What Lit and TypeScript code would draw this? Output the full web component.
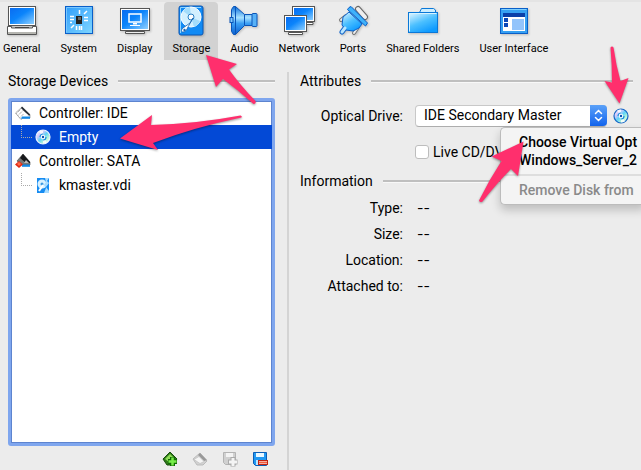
import { LitElement, html, svg, css } from "lit";
import { customElement, state } from "lit/decorators.js";
import { classMap } from "lit/directives/class-map.js";

const gradients = svg`
  <defs>
    <linearGradient id="screen" x1="0" y1="0" x2="1" y2="1">
      <stop offset="0" stop-color="#0a6cf0" /><stop offset=".45" stop-color="#0b84fb" /><stop offset="1" stop-color="#8fd0ff" />
    </linearGradient>
    <linearGradient id="sky" x1="0" y1="0" x2="1" y2="1">
      <stop offset="0" stop-color="#2f9dfb" /><stop offset="1" stop-color="#7fd6ff" />
    </linearGradient>
    <linearGradient id="folder" x1="0" y1="0" x2=".6" y2="1">
      <stop offset="0" stop-color="#e8f8ff" /><stop offset=".55" stop-color="#4cc0ff" /><stop offset="1" stop-color="#0f9bff" />
    </linearGradient>
    <linearGradient id="cone" x1="0" y1="0" x2="0" y2="1">
      <stop offset="0" stop-color="#0a6fdc" /><stop offset=".4" stop-color="#a9e2ff" /><stop offset=".6" stop-color="#3ba0f5" /><stop offset="1" stop-color="#0a5fd0" />
    </linearGradient>
    <linearGradient id="disc" x1="0" y1="0" x2="1" y2="1">
      <stop offset="0" stop-color="#ffffff" /><stop offset=".3" stop-color="#d5c9fb" /><stop offset=".5" stop-color="#5ed3f7" /><stop offset=".7" stop-color="#b6f5d8" /><stop offset="1" stop-color="#ffffff" />
    </linearGradient>
  </defs>`;

const big: Record<string, unknown> = {
  general: svg`
    <rect x="2.500" y="2.500" width="27" height="19" fill="#fff" stroke="#555" />
    <rect x="4" y="4" width="24" height="16" fill="url(#screen)" />
    <path d="M1.500 22.500h4v1.500h21v-1.500h4v8h-29z" fill="#fff" stroke="#555" />
    <path d="M2 28h28v2H2z" fill="#b5b5b0" /><path d="M9 23h14v1H9z" fill="#444" />`,
  system: svg`
    <rect x="2.500" y="2.500" width="27" height="27" fill="url(#sky)" stroke="#0a5fc8" />
    <path d="M3.500 28.500v-25h25" fill="none" stroke="#79c7ff" />
    <rect x="13" y="12" width="6" height="8" fill="#222" /><path d="M15 13h3v3h-3z" fill="#666" />
    <path d="M16.500 6v4M7 12.500h4M7 15.500h4M7 18.500h2M21 13.500h4M21 16.500h4M13.500 22v4M16.500 22v4M18.500 22v4M21 10l3-3M8 24l3-3" stroke="#fff" stroke-width="1.500" fill="none" />`,
  display: svg`
    <rect x="1.500" y="4.500" width="29" height="22" fill="#fff" stroke="#555" />
    <rect x="3" y="6" width="26" height="19" fill="url(#screen)" />
    <rect x="10" y="10" width="12" height="8" fill="none" stroke="#fff" stroke-width="1.500" />
    <path d="M14 19h4v1.500h-4zM11 21h10v1H11z" fill="#fff" />
    <path d="M6.500 27.500h19v2h-19z" fill="#eee" stroke="#555" />`,
  storage: svg`
    <rect x="4" y="2" width="24" height="29" rx="2" fill="#118af4" stroke="#0b57b5" />
    <path d="M5.500 29V3.500H26" fill="none" stroke="#8fd4ff" />
    <circle cx="16" cy="13" r="10" fill="#d2f0ff" stroke="#fff" />
    <path d="M16 13L8 7a10 10 0 0 1 7-4zM16 13l9 4a10 10 0 0 1-6 6z" fill="#a3dcfb" />
    <circle cx="16" cy="13" r="3" fill="#fff" stroke="#297fc5" />
    <path d="M18 14l-5 9c-1 3-3 5-5 5s-2-2 0-4l7-5z" fill="#fff" stroke="#1663af" stroke-width=".8" />
    <circle cx="9.500" cy="26" r="1.200" fill="#1663af" />`,
  audio: svg`
    <path d="M7.500 2.500h-2l-2 3v22l2 3h2l9-9h10v-11h-10z" fill="url(#cone)" stroke="#0a55b8" />
    <path d="M7.500 2.500v28M16.500 10.500v11" stroke="#0a55b8" fill="none" />
    <rect x="24" y="9.500" width="5" height="13" rx="1" fill="#57b1f7" stroke="#0a55b8" />
    <rect x="2" y="13.500" width="3" height="5" fill="#80caff" stroke="#0a55b8" />`,
  network: svg`
    <rect x="9.500" y="2.500" width="22" height="15" fill="#fff" stroke="#555" />
    <rect x="11" y="4" width="19" height="12" fill="url(#screen)" />
    <path d="M23 18.500h7v2h-7" fill="#fff" stroke="#555" />
    <rect x="1.500" y="11.500" width="22" height="16" fill="#fff" stroke="#555" />
    <rect x="3" y="13" width="19" height="13" fill="url(#screen)" />
    <path d="M5.500 28.500h14v2h-14z" fill="#fff" stroke="#555" />`,
  ports: svg`
    <path d="M21 5l7 8" stroke="#666" stroke-width="6" stroke-linecap="round" />
    <path d="M21 5l7 8" stroke="#eee" stroke-width="4" stroke-linecap="round" />
    <path d="M9 12l-5 4M21 23l-4 6" stroke="#777" stroke-width="4" stroke-linecap="round" />
    <path d="M9 12l-5 4M21 23l-4 6" stroke="#eee" stroke-width="2" stroke-linecap="round" />
    <path d="M8 24l-3 4" stroke="#0a5fc8" stroke-width="5" stroke-linecap="round" />
    <path d="M12 8L25 20l-3 4-6 3-7-1-4-5 1-8z" fill="url(#folder)" stroke="#0a5fc8" />
    <path d="M8 24l-3 4" stroke="#b8e5ff" stroke-width="3" stroke-linecap="round" />
    <path d="M12 3.500l2-1L30.500 19l-2 3L10.500 5.500z" fill="#3fb2fa" stroke="#0a5fc8" />`,
  folders: svg`
    <path d="M12.500 8.500l2-4h12l2 1.500v2.500z" fill="#cdeeff" stroke="#0a78d8" />
    <rect x="1.500" y="8.500" width="29" height="20" fill="url(#folder)" stroke="#0a78d8" />
    <path d="M2.500 27.500v-18h27" fill="none" stroke="#d8f3ff" />`,
  ui: svg`
    <rect x="2.500" y="4.500" width="27" height="25" fill="#36a0f2" stroke="#0a5fc8" />
    <path d="M3.500 5.500h25" stroke="#80d0ff" />
    <rect x="5" y="9" width="22" height="4" fill="#0a3fa8" /><rect x="5" y="13" width="22" height="14" fill="#fff" />
    <path d="M6 14h4v4H6zM6 19h4v4H6z" fill="#0a46b8" /><rect x="14" y="15" width="12" height="11" fill="#93c4fb" />`,
};

const disc = (edge: string) => svg`
  <circle cx="8" cy="8" r="7" fill="url(#disc)" stroke="${edge}" stroke-width="1.200" />
  <path d="M8 8L4 2.500A7 7 0 0 1 8 1.500zM8 8l4 5.500a7 7 0 0 1-4 1z" fill="#fff" opacity=".8" />
  <path d="M5 8a3 3 0 0 1 3-3M11 8a3 3 0 0 1-3 3" fill="none" stroke="#1b8fe0" stroke-width="1.200" />
  <circle cx="8" cy="8" r="2.200" fill="#fff" /><circle cx="8" cy="8" r="1.200" fill="#0b4fb0" />`;

const small: Record<string, unknown> = {
  ide: svg`
    <path d="M0.500 8l6.500-6 8 7.500v3.500H8l-2 1.500z" fill="#fff" stroke="#999" stroke-width=".8" />
    <path d="M1.500 8.500l6-6M3 10.500l5-5M5 12.500l4-4" stroke="#888" stroke-dasharray="1 1" />
    <path d="M7 1.500l8 8v1h-2L6 3z" fill="#252b33" /><path d="M9 6.500l5 4H9z" fill="#fff" />
    <path d="M7 11.500h8v2.300H6z" fill="#1289e8" />`,
  sata: svg`
    <path d="M2 8l6-7 7 8v3H7z" fill="#777" stroke="#444" stroke-width=".6" />
    <path d="M8 1l7 8v1h-4L5 5z" fill="#17191c" /><path d="M11 7l3 3h-5z" fill="#bbb" />
    <path d="M7 11.500h8v2.300H7z" fill="#1289e8" />
    <path d="M4 8l4 3.500L4 15 0 11.500z" fill="#e12a14" /><path d="M4 9l2 2-2 2-2-2z" fill="#ff6b4a" />`,
  cd: disc("#e8f2ff"),
  disk: disc("#1567c6"),
  hdd: svg`
    <rect x="2" y="1" width="12" height="15" fill="#168cf2" />
    <circle cx="7" cy="7" r="4.500" fill="#d8f1ff" /><circle cx="7" cy="7" r="1.500" fill="#3d98df" />
    <path d="M8 8l-4 6" stroke="#fff" stroke-width="2" /><path d="M10 1h4l-2 3 2 2-3 4 3 4v2H9l2-5-2-3 2-3z" fill="#a8dcff" />`,
  addController: svg`
    <path d="M1 8l7-7 7 7-5 6H5z" fill="#2e7a19" stroke="#164d0b" />
    <path d="M3 8l5-5 3 3-4 5z" fill="#90dd58" />
    <path d="M10.500 6v9M6 10.500h9" stroke="#126b06" stroke-width="5" /><path d="M10.500 6.500v8M6.500 10.500h8" stroke="#78ee4a" stroke-width="2.500" />`,
  removeController: svg`
    <path d="M1 8l7-6 7 8-4 4H5z" fill="#d2d2d2" stroke="#bbb" />
    <path d="M8 2l7 7-3 1-6-6z" fill="#999" /><path d="M2 8.500l5-3 5 5-4 2z" fill="#f5f5f5" stroke="#bbb" stroke-width=".6" />`,
  addDisk: svg`
    <path d="M1.500 1.500h12v12h-10l-2-2z" fill="#d0d0d0" stroke="#b3b3b3" />
    <path d="M4 2h7v4H4z" fill="#f3f3f3" />
    <path d="M11 6v9.500M6 11h9.500" stroke="#aaa" stroke-width="5" /><path d="M11 7v8M7 11h8" stroke="#f4f4f4" stroke-width="3" />`,
  removeDisk: svg`
    <path d="M1.500 1.500h13v13h-11l-2-2z" fill="#2098f2" stroke="#0b5db5" />
    <path d="M4 2h8v4H4z" fill="#e8f7ff" /><path d="M4 9h8v5H4z" fill="#bce5ff" />
    <rect x="6.500" y="9.500" width="9" height="4" fill="#fff" stroke="#c32211" /><path d="M7 11.500h8" stroke="#f05a3c" stroke-width="2" />`,
};

const bigIcon = (n: string) => html`<svg class="big" viewBox="0 0 32 32" aria-hidden="true">${gradients}${big[n]}</svg>`;
const smallIcon = (n: string) => html`<svg class="small" viewBox="0 0 16 16" aria-hidden="true">${gradients}${small[n]}</svg>`;

const tabs = [
  ["general", "General"], ["system", "System"], ["display", "Display"], ["storage", "Storage"], ["audio", "Audio"],
  ["network", "Network"], ["ports", "Ports"], ["folders", "Shared Folders"], ["ui", "User Interface"],
];

const devices = [
  { icon: "ide", label: "Controller: IDE", child: false },
  { icon: "cd", label: "Empty", child: true },
  { icon: "sata", label: "Controller: SATA", child: false },
  { icon: "hdd", label: "kmaster.vdi", child: true },
];

const actions = [
  { icon: "addController", label: "Add controller", disabled: false },
  { icon: "removeController", label: "Remove controller", disabled: true },
  { icon: "addDisk", label: "Add attachment", disabled: true },
  { icon: "removeDisk", label: "Remove attachment", disabled: false },
];

@customElement("app-root")
export class AppRoot extends LitElement {
  @state() private tab = "storage";
  @state() private device = "Empty";

  static styles = css`
    :host {
      display: flex; flex-direction: column; position: relative; min-height: 100vh; overflow: hidden;
      box-sizing: border-box; border-top: 2px solid #e4e4e4; background: #ececec; color: #000;
      font: 400 14px/16px Roboto, "Liberation Sans", sans-serif;
    }
    * { box-sizing: border-box; }
    button, select { font: inherit; color: inherit; border: 0; background: none; padding: 0; }
    svg { display: block; flex: none; }
    .big { width: 32px; height: 32px; margin: 0 -4px; filter: drop-shadow(1px 1px 1px #0003); }
    .small { width: 16px; height: 16px; }
    .tabs { display: flex; gap: 4px; margin-left: -5px; height: 58px; }
    .tab {
      display: flex; flex-direction: column; align-items: center; flex: none; gap: 5px;
      padding: 2px 8px 0; font-size: 11px; line-height: 16px; white-space: nowrap;
    }
    .tab.active { background: #d2d2d2; border-radius: 4px 4px 0 0; }
    .panes { flex: 1; display: grid; grid-template-columns: minmax(0, 287fr) minmax(0, 354fr); padding-top: 12px; }
    .left { display: flex; flex-direction: column; padding: 0 12px 3px 8px; }
    .right { border-left: 2px solid #d4d4d4; padding: 0 8px 0 11px; }
    h2 { display: flex; align-items: center; gap: 10px; margin: 0; height: 18px; font: inherit; white-space: nowrap; }
    h2::after { content: ""; flex: 1; height: 2px; background: #bfbfbf; border-bottom: 1px solid #f8f8f8; }
    .tree {
      flex: 1; margin: 8px 0 5px; padding: 0; list-style: none; background: #fff;
      border: 3px solid #7fa6ee; border-radius: 3px; box-shadow: inset 0 0 0 1px #5d84cf;
    }
    .node { display: flex; align-items: center; gap: 8px; width: 100%; height: 24px; padding-left: 4px; text-align: left; }
    .node.child { padding-left: 10px; }
    .node.child::before {
      content: ""; width: 10px; height: 12px; align-self: flex-start; margin-right: -5px;
      border: dotted #aaa; border-width: 0 0 1px 1px;
    }
    .node.selected { background: #0349d6; color: #fff; }
    .actions { display: flex; justify-content: flex-end; gap: 14px; padding-right: 7px; height: 16px; }
    .form { display: grid; grid-template-columns: 103px minmax(0, 1fr); column-gap: 12px; align-items: center; margin: 0; }
    .drive { padding: 15px 0 10px; }
    .label, .form dt { text-align: right; white-space: nowrap; }
    .control { position: relative; display: flex; align-items: center; gap: 6px; height: 22px; }
    .combo { position: relative; flex: 1; height: 22px; display: flex; }
    .combo select {
      appearance: none; flex: 1; min-width: 0; padding: 0 20px 2px 8px; background: #fff; border-radius: 4px;
      border: 1px solid #c8c8c8; border-bottom-color: #adadad;
    }
    .cap { position: absolute; top: 0; right: 0; width: 17px; height: 21px; border-radius: 0 4px 4px 0; background: linear-gradient(#5ba1f8, #1264ee); pointer-events: none; }
    .control .disk { margin-right: 4px; }
    .live { grid-column: 2; display: flex; align-items: center; gap: 4px; margin-top: 15px; height: 20px; white-space: nowrap; }
    .live input { appearance: none; width: 14px; height: 14px; margin: 0; background: #fff; border: 1px solid #bdbdbd; border-radius: 3px; }
    .menu {
      position: absolute; z-index: 1; top: 100%; left: 85px; right: -12px; overflow: hidden; height: 78px; padding: 5px 0;
      display: flex; flex-direction: column; background: #f4f4f4; border: 1px solid #bcbcbc; border-right: 0;
      border-radius: 5px 0 0 5px; box-shadow: 0 5px 10px #0003;
    }
    .menu button { height: 19px; padding-left: 18px; text-align: left; white-space: nowrap; font-weight: 500; }
    .menu hr { width: 100%; height: 2px; margin: 5px 0; border: 0; background: #dedede; }
    .menu button:disabled { color: #8a8a8a; }
    .info { padding-top: 5px; grid-auto-rows: 26px; }
    .info dd { margin: 0; padding-left: 2px; font-family: Inter, sans-serif; }
    .arrows { position: absolute; z-index: 2; top: -2px; left: 0; width: 641px; height: 470px; pointer-events: none; filter: drop-shadow(0 1px 1px #0006); }
  `;

  render() {
    return html`
      <nav class="tabs">
        ${tabs.map(([id, label]) => html`
          <button class=${classMap({ tab: true, active: this.tab === id })} @click=${() => (this.tab = id)}>
            ${bigIcon(id)}<span>${label}</span>
          </button>`)}
      </nav>
      <main class="panes">
        <section class="left">
          <h2>Storage Devices</h2>
          <ul class="tree">
            ${devices.map((d) => html`<li>
              <button class=${classMap({ node: true, child: d.child, selected: this.device === d.label })}
                @click=${() => (this.device = d.label)}>${smallIcon(d.icon)}<span>${d.label}</span></button>
            </li>`)}
          </ul>
          <div class="actions">
            ${actions.map((a) => html`<button aria-label=${a.label} ?disabled=${a.disabled}>${smallIcon(a.icon)}</button>`)}
          </div>
        </section>
        <section class="right">
          <h2>Attributes</h2>
          <div class="form drive">
            <label class="label" for="drive">Optical Drive:</label>
            <div class="control">
              <div class="combo">
                <select id="drive"><option>IDE Secondary Master</option></select>
                <svg class="cap" viewBox="0 0 17 21" aria-hidden="true">
                  <path d="M5.500 8.500l3-3 3 3M5.500 12.500l3 3 3-3" fill="none" stroke="#fff" stroke-width="1.500" stroke-linecap="round" />
                </svg>
              </div>
              <button class="disk" aria-label="Choose disk">${smallIcon("disk")}</button>
              <div class="menu">
                <button>Choose Virtual Opt</button>
                <button>Windows_Server_2</button>
                <hr />
                <button disabled>Remove Disk from</button>
              </div>
            </div>
            <label class="live"><input type="checkbox" />Live CD/DVD</label>
          </div>
          <h2>Information</h2>
          <dl class="form info">
            ${["Type:", "Size:", "Location:", "Attached to:"].map((t) => html`<dt>${t}</dt><dd>--</dd>`)}
          </dl>
        </section>
      </main>
      <svg class="arrows" viewBox="0 0 641 470" fill="#ff2f6d" aria-hidden="true">
        <path d="M206 55L237 64L229 69.500Q240 85 255.500 101Q256.500 104 253.500 104Q238 90 223 79L216 87Z" />
        <path d="M120 138.500L152 115L151 125Q195 124 240.500 115.500Q242.500 116 241.500 117.500Q195 127 153 143L158 150Z" />
        <path d="M619.500 103.500L604.500 81L612 82.500Q612 64 610.500 47.500Q612 45.500 613.500 47.500Q616 65 620.500 81L628.500 78Z" />
        <path d="M523.500 141.500L518 176L511 169Q497 183 482.500 201.500Q480 203 479 200.500Q489 180 501.500 161L491.500 156.500Z" />
      </svg>
    `;
  }
}
